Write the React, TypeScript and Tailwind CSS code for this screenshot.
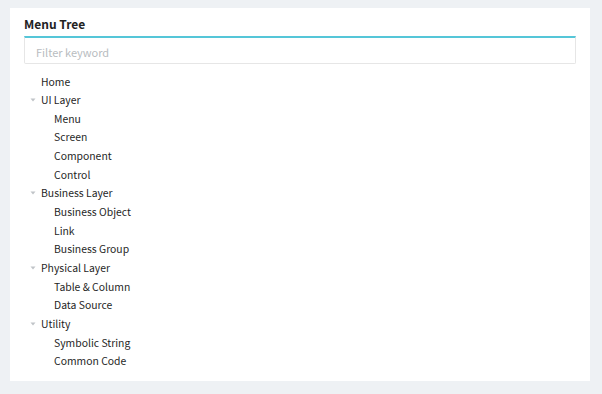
import React from "react";

type Node = { label: string; children?: string[] };

const tree: Node[] = [
  { label: "Home" },
  { label: "UI Layer", children: ["Menu", "Screen", "Component", "Control"] },
  { label: "Business Layer", children: ["Business Object", "Link", "Business Group"] },
  { label: "Physical Layer", children: ["Table & Column", "Data Source"] },
  { label: "Utility", children: ["Symbolic String", "Common Code"] },
];

function Caret() {
  return (
    <svg width="6" height="4" viewBox="0 0 6 4" className="text-[#c0c4c8]">
      <path d="M0.5 0.5h5L3 3.5z" fill="currentColor" />
    </svg>
  );
}

export default function App() {
  return (
    <div
      className="h-[394px] w-[602px] bg-[#eef1f4] pl-[10px] pt-[8px] text-[#333]"
      style={{ fontFamily: '"Noto Sans CJK KR", "Noto Sans", sans-serif' }}
    >
      <div className="h-[373px] w-[580px] bg-white px-[14px] pt-[9px]">
        <h2 className="h-[14px] text-[12px] font-bold leading-[14px] text-[#222]">Menu Tree</h2>
        <div className="mt-[5px] h-[28px] rounded-b-[2px] border-t-2 border-t-[#55c6d8] border-x border-b border-x-[#e6e6e6] border-b-[#e6e6e6]">
          <input
            placeholder="Filter keyword"
            className="h-full w-full bg-transparent px-[11px] pb-[2px] text-[11px] outline-none placeholder:text-[#b8bcc0]"
          />
        </div>
        <ul className="mt-[8px] text-[10.4px] text-[#1f1f1f]">
          {tree.map((n) => (
            <li key={n.label}>
              <div className="flex h-[18.67px] items-center">
                <span className="flex w-[17px] justify-center">{n.children && <Caret />}</span>
                <span>{n.label}</span>
              </div>
              {n.children && (
                <ul>
                  {n.children.map((c) => (
                    <li key={c} className="flex h-[18.67px] items-center pl-[30px]">
                      {c}
                    </li>
                  ))}
                </ul>
              )}
            </li>
          ))}
        </ul>
      </div>
    </div>
  );
}
